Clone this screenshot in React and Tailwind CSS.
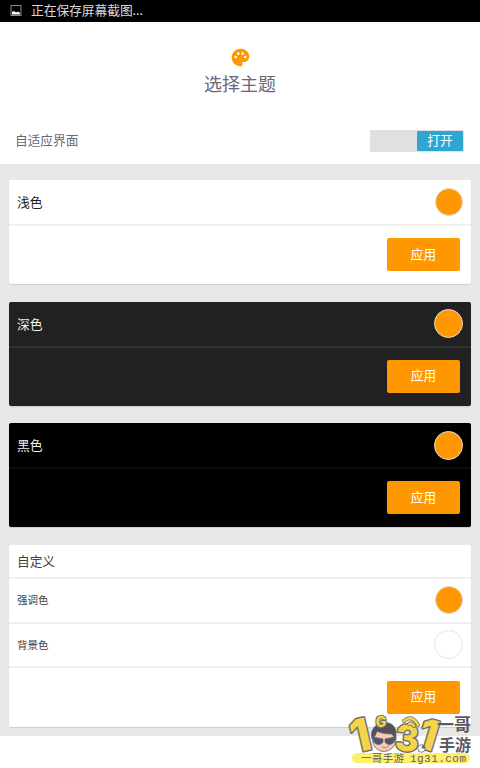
import { MdPalette } from "react-icons/md";

function Dot({ className = "size-7 border-[#dcdcdc] bg-[#ff9800]" }) {
  return <span className={`shrink-0 rounded-full border ${className}`} />;
}

function ApplyButton() {
  return (
    <button className="h-[33px] w-[73px] rounded-[2px] bg-[#ff9800] pb-px text-[12.7px] leading-none text-white">
      应用
    </button>
  );
}

function ThemeCard({ name, card, header, dot }) {
  return (
    <section className={`h-[104px] rounded-[2px] shadow-[0_1px_1px_rgba(0,0,0,0.12)] ${card}`}>
      <div className={`flex h-[46px] items-center justify-between border-b-2 px-2 text-[12.8px] ${header}`}>
        <span>{name}</span>
        <Dot className={dot} />
      </div>
      <div className="flex justify-end pt-3 pr-[11px]">
        <ApplyButton />
      </div>
    </section>
  );
}

function Watermark() {
  const digit = {
    fontFamily: "Inter, 'Liberation Sans', sans-serif",
    fontWeight: 800,
    fill: "#f5d548",
    stroke: "#74706e",
    strokeWidth: 3,
    paintOrder: "stroke",
    strokeLinejoin: "round",
    textAnchor: "middle",
  };
  const label = { fontFamily: "'Noto Sans CJK SC', sans-serif", fill: "#5d5962" };
  return (
    <svg className="absolute top-[706px] left-[340px]" width="140" height="62" viewBox="340 706 140 62">
      <rect x="352" y="753" width="118" height="10" rx="5" fill="#fff06a" />
      <text x="0" y="0" transform="translate(364 751) rotate(-13)" fontSize="45" {...digit}>1</text>
      <g stroke="#68646c" strokeWidth="0.8">
        <ellipse cx="384" cy="740" rx="11.5" ry="11.5" fill="#f4cbb8" />
        <path d="M372 739c-2-8 2-14 9-16 8-2 16 2 15 12v5l-4-6c-6 0-12-1-15-3-1 3-2 6-5 8Z" fill="#555159" />
        <path d="M373 737l10 2v3c-2 4-9 3-10-2Zm12 2 10-2c1 7-7 10-10 5Z" fill="#51546c" />
        <path d="M382 747q4 2 7-1" fill="none" stroke="#a76d63" />
      </g>
      <text x="381" y="727" fontSize="14" {...digit} strokeWidth="2">G</text>
      <text x="0" y="0" transform="translate(406 751) rotate(5)" fontSize="36" {...digit}>3</text>
      <g fill="none" strokeLinecap="round">
        <path d="M404 721q8-7 14 4m-9-1q3-2 5 2" stroke="#74706e" strokeWidth="4" />
        <path d="M404 721q8-7 14 4m-9-1q3-2 5 2" stroke="#f5d548" strokeWidth="2.4" />
      </g>
      <text x="0" y="0" transform="translate(424 749) rotate(17)" fontSize="42" {...digit}>1</text>
      <circle cx="421.5" cy="748.5" r="3.8" fill="#faf8f3" stroke="#68646c" strokeWidth="0.8" />
      <path d="M421.5 748.5l1-3.8a4 4 0 0 1 2.8 3.8Z" fill="#68646c" />
      <g {...label} fontWeight="700">
        <text x="437" y="731" fontSize="17" textLength="34">一哥</text>
        <text x="439" y="751" fontSize="16" textLength="32">手游</text>
      </g>
      <g {...label}>
        <text x="361" y="762" fontSize="10.5" textLength="43">一哥手游</text>
        <text x="410" y="761.5" fontSize="11" textLength="56" style={{ fontFamily: "'Liberation Mono', monospace" }}>1g31.com</text>
      </g>
    </svg>
  );
}

export default function App() {
  return (
    <div className="relative h-[768px] w-[480px] overflow-hidden bg-white font-['Noto_Sans_CJK_SC','Noto_Sans',sans-serif]">
      <div className="flex h-[22px] items-center bg-black pl-[10px] text-[12.8px] leading-none text-[#d8d8d8]">
        <svg className="mr-[9px]" width="12" height="12" viewBox="0 0 12 12">
          <rect x="1" y="0.5" width="10" height="10" fill="none" stroke="#8c8c8c" />
          <path d="M2 9.5V7l2-1 2 1.5L8 6.5 10 8v1.5Z" fill="#fff" />
        </svg>
        <span className="pb-px tracking-[-0.1px]">正在保存屏幕截图...</span>
      </div>

      <header className="h-[142px] bg-white text-[#68687a]">
        <div className="flex h-[97px] flex-col items-center pt-[25px]">
          <MdPalette className="size-[21px] text-[#ff9800]" />
          <h1 className="mt-[3px] text-lg leading-6">选择主题</h1>
        </div>
        <div className="flex h-[43px] items-center justify-between pr-4 pl-[15px]">
          <span className="pb-px text-[12.7px]">自适应界面</span>
          <div className="flex h-[22px] w-[94px] justify-end bg-[#e0e0e0] p-px">
            <span className="flex w-[46px] items-center justify-center rounded-[1px] bg-[#2fa6d2] text-[12.8px] leading-none text-white">
              打开
            </span>
          </div>
        </div>
      </header>

      <main className="flex h-[572px] flex-col gap-[17.5px] bg-[#e8e8e8] px-[9px] pt-4">
        <ThemeCard name="浅色" card="bg-white" header="border-[#f0f0f0] text-[#212121]" dot="size-7 border-[#e0d8cc] bg-[#ff9800]" />
        <ThemeCard name="深色" card="bg-[#212121]" header="border-[#323232] text-[#f0f0f0]" dot="size-[29px] border-[#e4dccf] bg-[#ff9800]" />
        <ThemeCard name="黑色" card="bg-black" header="border-[#0c0c0c] text-[#f0f0f0]" dot="size-[29px] border-[#e4dccf] bg-[#ff9800]" />
        <section className="h-[182px] shrink-0 rounded-[2px] bg-white text-[#424242] shadow-[0_1px_1px_rgba(0,0,0,0.12)]">
          <div className="flex h-[34px] items-center border-b-2 border-[#efefef] px-2 text-[12.7px]">自定义</div>
          <div className="flex h-[45px] items-center justify-between border-b-2 border-[#efefef] px-2 text-[10.5px]">
            强调色
            <Dot />
          </div>
          <div className="flex h-[44px] items-center justify-between border-b-2 border-[#efefef] px-2 text-[10.5px]">
            背景色
            <Dot className="size-[29px] border-[#e6e6e6] bg-white" />
          </div>
          <div className="flex justify-end pt-[13px] pr-[11px]">
            <ApplyButton />
          </div>
        </section>
      </main>
      <Watermark />
    </div>
  );
}
